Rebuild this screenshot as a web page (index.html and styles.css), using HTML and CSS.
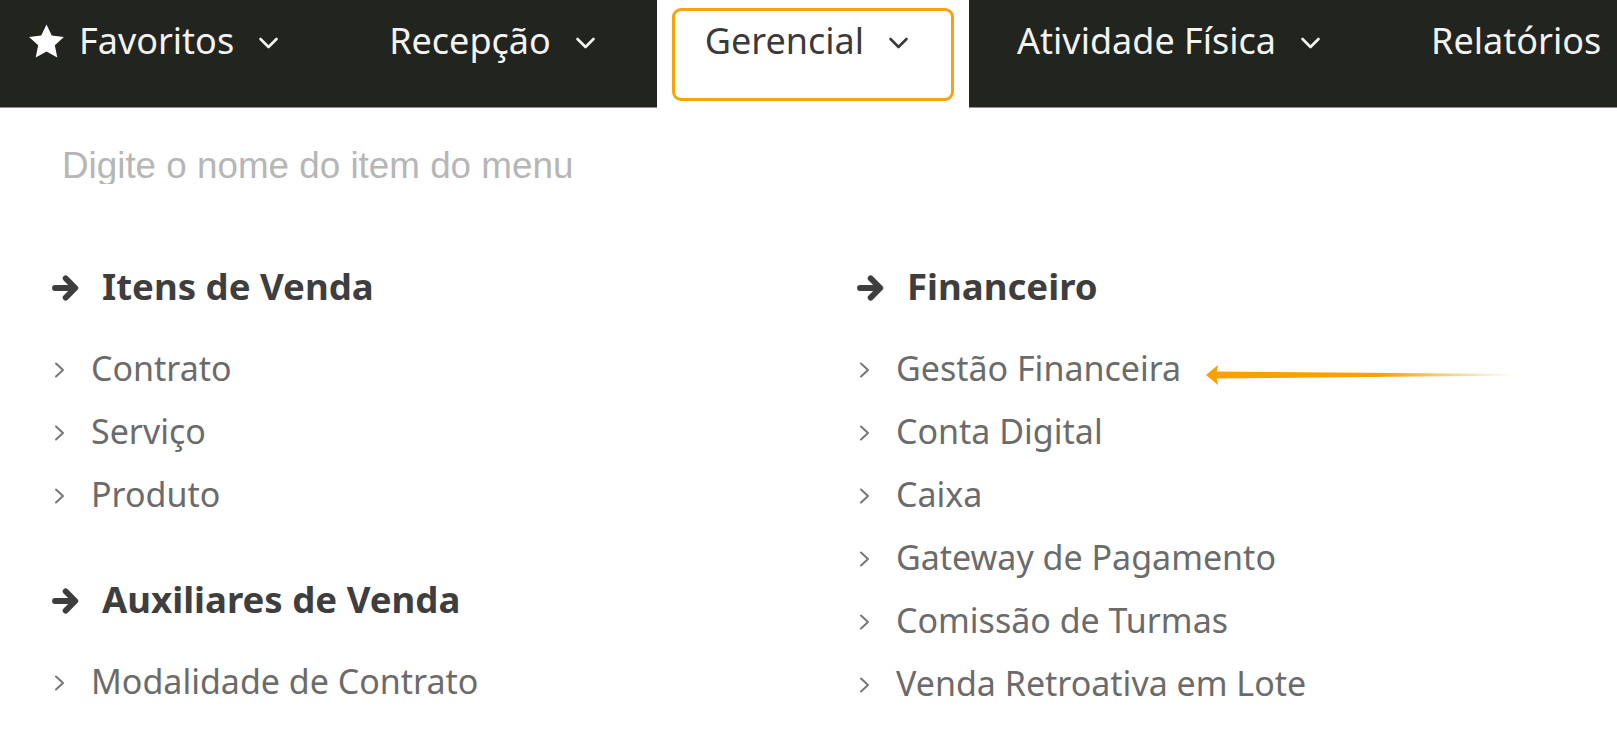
FILE: index.html
```html
<!DOCTYPE html>
<html lang="pt-BR">
<head>
<meta charset="utf-8">
<title>Menu Gerencial</title>
<link rel="stylesheet" href="styles.css">
</head>
<body>
<nav class="topbar">
  <div class="nav-item first">
    <svg class="star" viewBox="0 0 24 22" aria-hidden="true"><path d="M12 0.3l3.4 7.1 7.9 1-5.9 5.4 1.6 7.9L12 17.8l-7 3.9 1.6-7.9L0.7 8.4l7.9-1z"/></svg>
    <span class="nav-label">Favoritos</span>
    <svg class="chev" viewBox="0 0 20 12" aria-hidden="true"><path d="M2 2l8 8 8-8"/></svg>
  </div>
  <div class="nav-item second">
    <span class="nav-label">Recepção</span>
    <svg class="chev" viewBox="0 0 20 12" aria-hidden="true"><path d="M2 2l8 8 8-8"/></svg>
  </div>
  <div class="nav-item active">
    <span class="nav-label">Gerencial</span>
    <svg class="chev" viewBox="0 0 20 12" aria-hidden="true"><path d="M2 2l8 8 8-8"/></svg>
    <span class="highlight"></span>
  </div>
  <div class="nav-item fourth">
    <span class="nav-label">Atividade Física</span>
    <svg class="chev" viewBox="0 0 20 12" aria-hidden="true"><path d="M2 2l8 8 8-8"/></svg>
  </div>
  <div class="nav-item last">
    <span class="nav-label">Relatórios</span>
  </div>
</nav>

<main class="panel">
  <input class="search" type="text" placeholder="Digite o nome do item do menu">
  <div class="columns">
    <div class="col">
      <section class="group">
        <h3 class="group-title"><svg class="arrow" viewBox="0 0 24 24" aria-hidden="true"><path d="M3 12h14.5M11 4.8L18.2 12 11 19.2"/></svg>Itens de Venda</h3>
        <ul class="items">
          <li><svg class="ichev" viewBox="0 0 13 18" aria-hidden="true"><path d="M3 2.5l7 6.5-7 6.5"/></svg>Contrato</li>
          <li><svg class="ichev" viewBox="0 0 13 18" aria-hidden="true"><path d="M3 2.5l7 6.5-7 6.5"/></svg>Serviço</li>
          <li><svg class="ichev" viewBox="0 0 13 18" aria-hidden="true"><path d="M3 2.5l7 6.5-7 6.5"/></svg>Produto</li>
        </ul>
      </section>
      <section class="group">
        <h3 class="group-title"><svg class="arrow" viewBox="0 0 24 24" aria-hidden="true"><path d="M3 12h14.5M11 4.8L18.2 12 11 19.2"/></svg>Auxiliares de Venda</h3>
        <ul class="items">
          <li><svg class="ichev" viewBox="0 0 13 18" aria-hidden="true"><path d="M3 2.5l7 6.5-7 6.5"/></svg>Modalidade de Contrato</li>
        </ul>
      </section>
    </div>
    <div class="col">
      <section class="group">
        <h3 class="group-title"><svg class="arrow" viewBox="0 0 24 24" aria-hidden="true"><path d="M3 12h14.5M11 4.8L18.2 12 11 19.2"/></svg>Financeiro</h3>
        <ul class="items">
          <li class="pointed"><svg class="ichev" viewBox="0 0 13 18" aria-hidden="true"><path d="M3 2.5l7 6.5-7 6.5"/></svg>Gestão Financeira
            <svg class="annot" viewBox="0 0 310 26" aria-hidden="true">
              <defs>
                <linearGradient id="fade" x1="0" y1="0" x2="1" y2="0">
                  <stop offset="0" stop-color="#f8a100"/>
                  <stop offset="0.55" stop-color="#f8a100"/>
                  <stop offset="1" stop-color="#f8a100" stop-opacity="0"/>
                </linearGradient>
              </defs>
              <polygon points="9,9.5 310,12 310,13.5 9,16.5" fill="url(#fade)"/>
              <polygon points="0,13 12,3 10,13 12,23" fill="#f8a100"/>
            </svg>
          </li>
          <li><svg class="ichev" viewBox="0 0 13 18" aria-hidden="true"><path d="M3 2.5l7 6.5-7 6.5"/></svg>Conta Digital</li>
          <li><svg class="ichev" viewBox="0 0 13 18" aria-hidden="true"><path d="M3 2.5l7 6.5-7 6.5"/></svg>Caixa</li>
          <li><svg class="ichev" viewBox="0 0 13 18" aria-hidden="true"><path d="M3 2.5l7 6.5-7 6.5"/></svg>Gateway de Pagamento</li>
          <li><svg class="ichev" viewBox="0 0 13 18" aria-hidden="true"><path d="M3 2.5l7 6.5-7 6.5"/></svg>Comissão de Turmas</li>
          <li><svg class="ichev" viewBox="0 0 13 18" aria-hidden="true"><path d="M3 2.5l7 6.5-7 6.5"/></svg>Venda Retroativa em Lote</li>
        </ul>
      </section>
    </div>
  </div>
</main>
</body>
</html>
```

FILE: styles.css
```css
* { box-sizing: border-box; }

html, body {
  margin: 0;
  padding: 0;
  background: #ffffff;
  overflow: hidden;
}

body {
  width: 1617px;
  height: 730px;
  font-family: "Noto Sans", "Open Sans", "DejaVu Sans", sans-serif;
}

/* ---------- top navigation ---------- */
.topbar {
  display: flex;
  height: 108px;
  background: #22241f;
  white-space: nowrap;
}

.nav-item {
  position: relative;
  display: flex;
  align-items: flex-start;
  height: 108px;
  padding: 23px 61px 0 48px;
  border-bottom: 1px solid #8f918c;
  color: #f3f3f1;
  font-size: 36px;
  line-height: 36px;
}

.nav-item.first { padding-left: 28px; padding-right: 62px; }
.nav-item.second { padding-right: 61px; }
.nav-item.active { padding-right: 60px; }
.nav-item.fourth { padding-right: 62px; }
.nav-item.last { flex: 1; }

.nav-item.active {
  background: #ffffff;
  border-bottom-color: #ffffff;
  color: #3a3a3a;
}

.star {
  width: 37px;
  height: 34px;
  margin: 1px 14px 0 0;
  fill: #ffffff;
}

.chev {
  width: 21px;
  height: 12px;
  margin: 14px 0 0 24px;
  fill: none;
  stroke: currentColor;
  stroke-width: 2.6;
  stroke-linecap: round;
  stroke-linejoin: round;
}

.highlight {
  position: absolute;
  left: 15px;
  right: 15px;
  top: 8px;
  height: 93px;
  border: 3px solid #f9a30c;
  border-radius: 9px;
}

/* ---------- dropdown panel ---------- */
.panel {
  padding: 40px 0 0 52px;
}

.search {
  display: block;
  width: 640px;
  height: 36px;
  margin: 0 0 71px 10px;
  padding: 0;
  border: 0;
  outline: none;
  background: transparent;
  font-family: "Liberation Sans", Arial, sans-serif;
  font-size: 36.8px;
  line-height: 36px;
  color: #333;
}

.search::placeholder {
  color: #b6b6b6;
  opacity: 1;
}

.columns {
  display: grid;
  grid-template-columns: 805px 1fr;
}

.group + .group { margin-top: 42px; }

.group-title {
  display: flex;
  align-items: center;
  height: 63px;
  margin: 0 0 19px 0;
  font-size: 36.6px;
  font-weight: 700;
  line-height: 63px;
  color: #3e3e3e;
}

.arrow {
  width: 32px;
  height: 32px;
  margin: 2px 19px 0 -1px;
  fill: none;
  stroke: #3e3e3e;
  stroke-width: 4.4;
  stroke-linecap: round;
  stroke-linejoin: round;
}

.items {
  list-style: none;
  margin: 0;
  padding: 0;
}

.items li {
  position: relative;
  display: flex;
  align-items: center;
  height: 63px;
  font-size: 34px;
  line-height: 63px;
  color: #6b6b6b;
  white-space: nowrap;
}

.ichev {
  width: 13px;
  height: 18px;
  margin: 2px 25px 0 1px;
  fill: none;
  stroke: #777777;
  stroke-width: 2;
  stroke-linecap: round;
  stroke-linejoin: round;
}

.annot {
  position: absolute;
  left: 349px;
  top: 25px;
  width: 310px;
  height: 26px;
}
```
